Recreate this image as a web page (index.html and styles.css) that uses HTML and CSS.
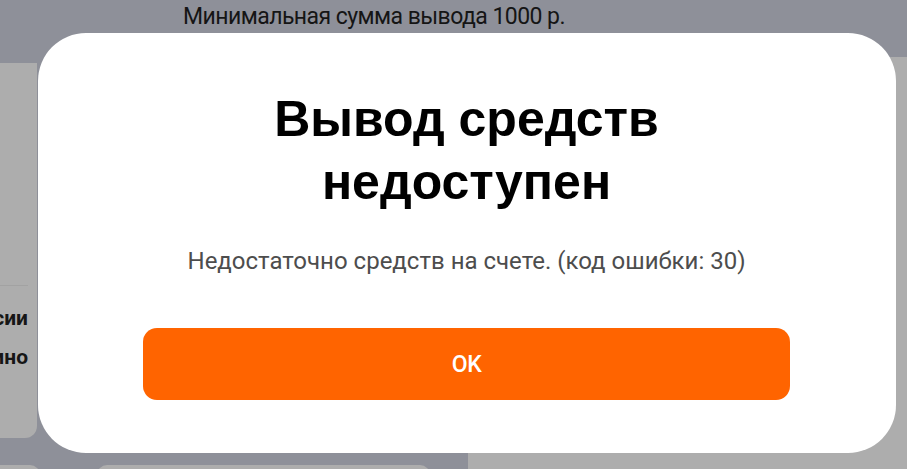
FILE: index.html
```html
<!DOCTYPE html>
<html lang="ru">
<head>
<meta charset="utf-8">
<title>Вывод средств недоступен</title>
<link rel="stylesheet" href="styles.css">
</head>
<body>
<div class="page">
  <div class="topbar">Минимальная сумма вывода 1000 р.</div>
  <div class="content">
    <div class="left-col">
      <div class="left-card">
        <div class="sep"></div>
        <div class="row first">сии</div>
        <div class="row">ино</div>
      </div>
      <div class="bottom-cards">
        <div class="bcard small"></div>
        <div class="bcard wide"></div>
      </div>
    </div>
    <div class="right-card"></div>
  </div>

  <div class="modal" role="dialog">
    <h1 class="title">Вывод средств<br>недоступен</h1>
    <p class="message">Недостаточно средств на счете. (код ошибки: 30)</p>
    <button class="ok-btn" type="button">OK</button>
  </div>
</div>
</body>
</html>
```
FILE: styles.css
```css
* { box-sizing: border-box; }
html, body { margin: 0; padding: 0; }
body {
  width: 907px;
  height: 469px;
  overflow: hidden;
  background: #8e9099;
  font-family: Roboto, "Liberation Sans", sans-serif;
}
.page {
  position: relative;
  width: 907px;
  height: 469px;
  overflow: hidden;
}
.topbar {
  height: 57px;
  padding: 4px 0 0 183px;
  font-size: 23px;
  letter-spacing: -0.55px;
  color: #151515;
  line-height: 26px;
}
.content {
  display: flex;
  height: 412px;
  overflow: hidden;
}
.left-col {
  width: 468px;
  flex-shrink: 0;
  display: flex;
  flex-direction: column;
}
.left-card {
  flex-shrink: 0;
  margin-top: 6px;
  width: 37px;
  height: 375px;
  background: #adadad;
  border-bottom-right-radius: 12px;
  overflow: hidden;
  padding-top: 222px;
  display: flex;
  flex-direction: column;
  align-items: flex-end;
}
.sep {
  width: 28px;
  margin-right: 9px;
  align-self: flex-start;
  height: 1px;
  background: #a2a2a2;
}
.row {
  font-weight: 700;
  font-size: 21px;
  color: #161616;
  padding-right: 9px;
  line-height: 39px;
  white-space: nowrap;
}
.row.first { margin-top: 13px; }
.bottom-cards {
  flex-shrink: 0;
  margin-top: 27px;
  display: flex;
  gap: 57px;
}
.bcard {
  height: 20px;
  background: #adadad;
  border-radius: 10px 10px 0 0;
}
.bcard.small { width: 40px; border-top-left-radius: 0; }
.bcard.wide { width: 333px; }
.right-card {
  flex: 1;
  background: #adadad;
  height: 420px;
}

.modal {
  position: absolute;
  left: 38px;
  top: 33px;
  width: 858px;
  height: 420px;
  background: #ffffff;
  border-radius: 48px;
  padding: 55px 106px 0 105px;
  display: flex;
  flex-direction: column;
  align-items: center;
}
.title {
  margin: 0;
  font-family: "Liberation Sans", Arial, sans-serif;
  font-weight: 700;
  font-size: 50px;
  line-height: 63px;
  color: #000000;
  text-align: center;
}
.message {
  margin: 32px 0 0;
  font-family: Roboto, sans-serif;
  font-size: 24px;
  line-height: 30px;
  color: #4d4d4d;
  text-align: center;
}
.ok-btn {
  margin-top: 52px;
  width: 100%;
  height: 72px;
  flex-shrink: 0;
  border: none;
  border-radius: 14px;
  background: #ff6400;
  color: #ffffff;
  font-family: Roboto, sans-serif;
  font-weight: 500;
  font-size: 23px;
  letter-spacing: -0.5px;
  cursor: pointer;
}
```
